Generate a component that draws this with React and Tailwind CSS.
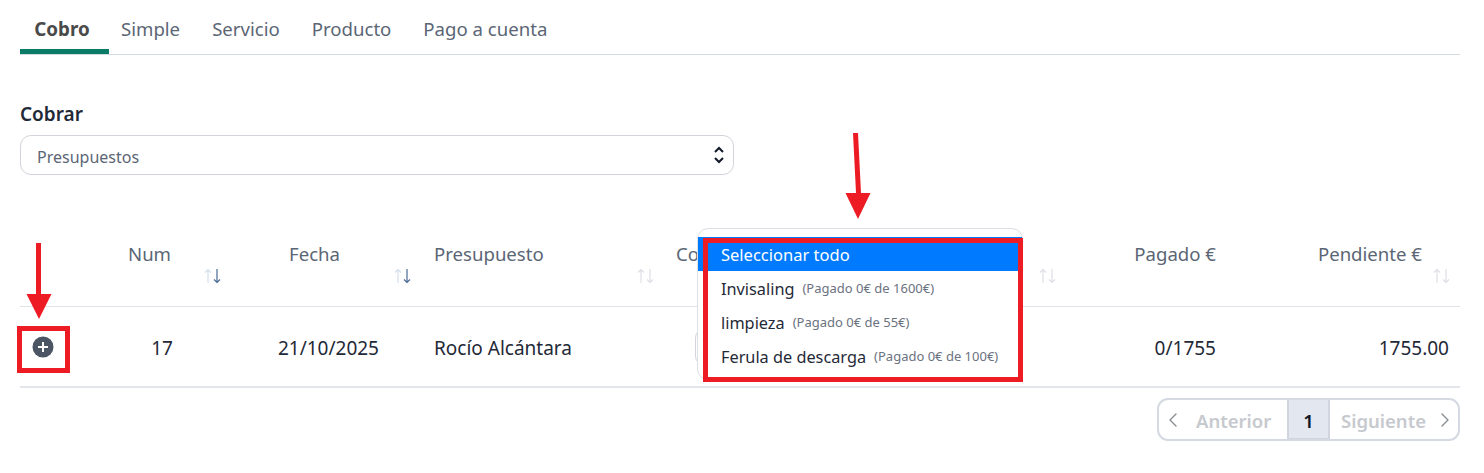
import { ChevronLeft, ChevronRight } from 'lucide-react';

const tabs = ['Simple', 'Servicio', 'Producto', 'Pago a cuenta'];

const options = [
  { name: 'Invisaling', paid: '(Pagado 0€ de 1600€)' },
  { name: 'limpieza', paid: '(Pagado 0€ de 55€)' },
  { name: 'Ferula de descarga', paid: '(Pagado 0€ de 100€)' },
];

function SortIcon({ active }) {
  return (
    <svg width="20" height="16" viewBox="0 0 20 16" fill="none" strokeWidth="1.2">
      <path d="M5 15V1.500M2 4.500l3-3 3 3" stroke={active ? '#d5dfec' : '#dcdfe4'} />
      <path d="M14 1v13.500M11 11.500l3 3 3-3" stroke={active ? '#4a6a94' : '#dcdfe4'} />
    </svg>
  );
}

function HeadCell({ label, active, className, sortClass = 'justify-end' }) {
  return (
    <div className={`flex flex-col ${className}`}>
      <span className="mt-[1px] leading-[24px] text-[18.6px] text-[#5b6675]">{label}</span>
      <div className={`flex mt-[2px] ${sortClass}`}>
        <SortIcon active={active} />
      </div>
    </div>
  );
}

function RedArrow({ className, height, d }) {
  return (
    <svg className={`absolute ${className}`} width="26" height={height} viewBox={`0 0 26 ${height}`}>
      <path d={d} fill="#ed1c24" />
    </svg>
  );
}

export default function App() {
  return (
    <div className="relative w-[1484px] h-[473px] bg-white overflow-hidden pl-5 pr-6 font-['Noto_Sans','Open_Sans',sans-serif]">
      <div className="flex h-[55px] border-b border-[#d5d9e0] pt-[14px] text-[18.6px] text-[#5b6675]">
        <div className="w-[89px] h-[40px] border-b-[5px] border-[#0b7a66] pr-[5px] text-center text-[18.8px] font-bold text-[#4a4a4a] leading-[30px]">
          Cobro
        </div>
        <div className="flex gap-[32px] pl-[12px] leading-[30px]">
          {tabs.map((tab) => (
            <span key={tab}>{tab}</span>
          ))}
        </div>
      </div>

      <div className="mt-[46px] text-[19px] font-semibold leading-[26px] text-[#1f2937]">Cobrar</div>
      <div className="mt-[8px] w-[714px] h-[40px] border border-[#d1d5db] rounded-[11px] flex items-center justify-between pl-4 pr-[8px] text-[16px] text-[#5b6675]">
        <span className="mt-[3px]">Presupuestos</span>
        <svg width="12" height="22" viewBox="0 0 12 22" fill="none" stroke="#111827" strokeWidth="2">
          <path d="M2 8l4-4 4 4M2 14l4 4 4-4" />
        </svg>
      </div>

      <div className="grid grid-cols-[68px_135px_190px_245px_405px_170px_227px] mt-[66px] h-[66px] border-b border-[#e0e3e8]">
        <div />
        <HeadCell label="Num" active className="pl-[40px]" />
        <HeadCell label="Fecha" active className="pl-[66px]" />
        <HeadCell label="Presupuesto" className="pl-[21px] pr-[2px]" />
        <HeadCell label="Co" className="pl-[18px] pr-[5px]" />
        <HeadCell label="Pagado €" className="items-end pr-[17px]" sortClass="hidden" />
        <HeadCell label="Pendiente €" className="items-end pr-[38px]" sortClass="-mr-[30px]" />
      </div>

      <div className="grid grid-cols-[68px_135px_190px_245px_405px_170px_227px] items-center h-[81px] border-b-2 border-[#e2e5ea] text-[19px] text-[#1f2937]">
        <div className="pl-[12px]">
          <svg width="22" height="22" viewBox="0 0 22 22">
            <circle cx="11" cy="11" r="10.500" fill="#4b5563" />
            <path d="M11 6v10M6 11h10" stroke="#fff" strokeWidth="2" />
          </svg>
        </div>
        <div className="text-right pr-[50px] mt-[4px]">17</div>
        <div className="text-right pr-[34px] mt-[4px]">21/10/2025</div>
        <div className="pl-[21px] mt-[4px]">Rocío Alcántara</div>
        <div className="pl-[37px]">
          <div className="w-[300px] h-[38px] border border-[#d1d5db] rounded-[10px]" />
        </div>
        <div className="text-right pr-[17px] mt-[4px]">0/1755</div>
        <div className="text-right pr-[11px] mt-[4px]">1755.00</div>
      </div>

      <div className="flex justify-end mt-[10px]">
        <div className="flex items-center w-[303px] h-[43px] border-2 border-[#d5d9e2] rounded-[11px] text-[18.5px] font-semibold text-[#c6c9ce]">
          <div className="flex items-center w-[128px] pl-[2px] gap-[11px]">
            <ChevronLeft size={24} strokeWidth={1.4} className="text-[#8a8d92]" />
            <span className="mt-[3px]">Anterior</span>
          </div>
          <div className="w-[43px] h-full flex items-center justify-center bg-[#e2e7f0] border-x-2 border-b border-[#d0d5df] text-[#111827]">
            <span className="mt-[3px]">1</span>
          </div>
          <div className="flex items-center justify-between flex-1 pl-[11px] pr-[1px]">
            <span className="mt-[3px]">Siguiente</span>
            <ChevronRight size={24} strokeWidth={1.4} className="text-[#8a8d92]" />
          </div>
        </div>
      </div>

      {/* dropdown over the table */}
      <div className="absolute left-[697px] top-[228px] w-[326px] h-[152px] bg-white border border-[#dcdfe4] rounded-[11px] pt-[8px]">
        <div className="h-[34px] bg-[#007bff] text-white text-[16.5px] leading-[36px] pl-[23px]">Seleccionar todo</div>
        {options.map((opt) => (
          <div key={opt.name} className="h-[34px] flex items-center gap-2 pl-[23px] pt-[2px] text-[16.3px] text-[#1f2937]">
            <span>{opt.name}</span>
            <span className="text-[13px] text-[#6b7280]">{opt.paid}</span>
          </div>
        ))}
      </div>

      {/* red annotations */}
      <div className="absolute left-[703px] top-[238px] w-[320px] h-[144px] border-[5px] border-[#ed1c24]" />
      <div className="absolute left-[17px] top-[326px] w-[53px] h-[47px] border-[5px] border-[#ed1c24]" />
      <RedArrow className="left-[26px] top-[243px]" height={76} d="M10 0h5v51h10.500L13 76 .500 51H10z" />
      <RedArrow className="left-[845px] top-[133px]" height={86} d="M8 0h5l3 60h9.500L13 86 .500 60H11z" />
    </div>
  );
}
